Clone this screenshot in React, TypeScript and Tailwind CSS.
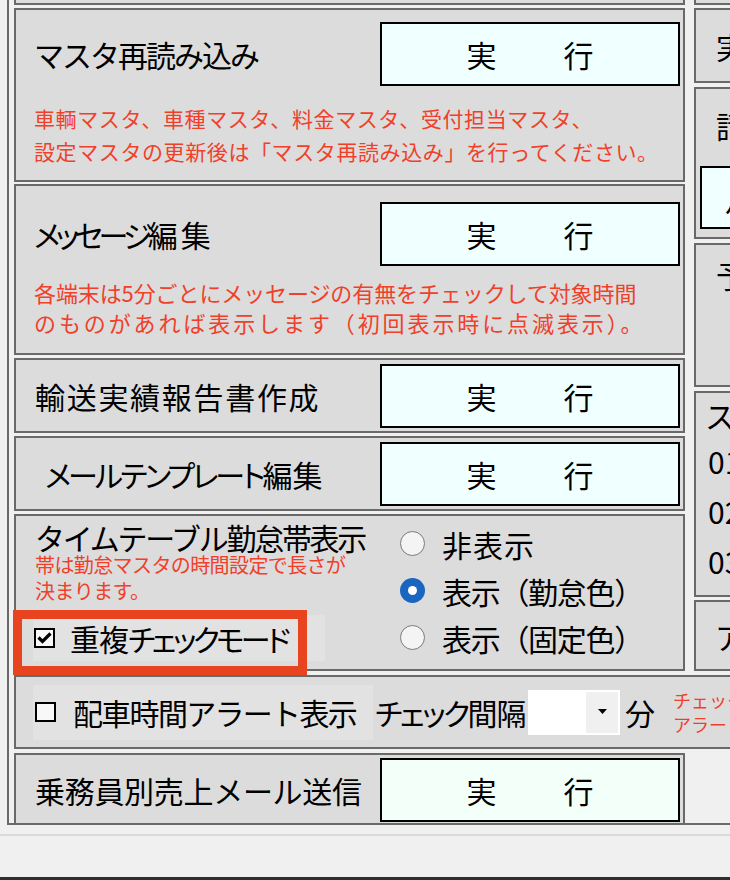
import React from 'react';

// 管理メニュー画面（一部）
const RED = 'text-[#f0402a]';
const PALT = "[font-feature-settings:'palt']";

function Panel({ className = '', children }: { className?: string; children?: React.ReactNode }) {
  return <div className={`border-2 border-[#696969] bg-[#dcdcdc] ${className}`}>{children}</div>;
}

function ExecButton({ bg = 'bg-[#f0ffff]' }: { bg?: string }) {
  return (
    <div
      className={`flex h-[64px] w-[300px] shrink-0 items-center justify-center gap-[67px] border-2 border-black ${bg} text-[30px] leading-none`}
    >
      <span>実</span>
      <span>行</span>
    </div>
  );
}

function CheckBox({ checked }: { checked?: boolean }) {
  return (
    <div className="flex h-[20px] w-[21px] shrink-0 items-center justify-center border-2 border-black bg-[#f8f8f8]">
      {checked && (
        <svg width="15" height="14" viewBox="0 0 15 14">
          <path d="M1.5 6.5 L5.5 10.5 L13.5 2.5" fill="none" stroke="black" strokeWidth="3.2" />
        </svg>
      )}
    </div>
  );
}

function Radio({ checked, label, tracking }: { checked?: boolean; label: string; tracking: string }) {
  return (
    <div className="flex h-[47px] items-center">
      {checked ? (
        <div className="flex h-[25px] w-[25px] items-center justify-center rounded-full bg-[#1a65c0]">
          <div className="h-[9px] w-[9px] rounded-full bg-white" />
        </div>
      ) : (
        <div className="h-[25px] w-[25px] rounded-full border-[1.5px] border-[#7a7a7a] bg-[#f4f4f4]" />
      )}
      <span className={`ml-[17px] text-[30px] leading-none ${tracking}`}>{label}</span>
    </div>
  );
}

export default function App() {
  return (
    <div className="relative flex h-[880px] w-[730px] flex-col overflow-hidden bg-[#f0f0f0] font-['Noto_Sans_CJK_JP','Noto_Sans_CJK_SC',sans-serif] text-black">
      {/* 外枠 */}
      <div className="ml-[7px] h-[825px] w-[830px] shrink-0 border-b-2 border-l-2 border-[#696969] pl-[5px]">
        <div className="flex">
          {/* 左列 */}
          <div className="flex w-[671px] shrink-0 flex-col">
            <div className="h-[5px] border-x-2 border-b-2 border-[#696969] bg-[#dcdcdc]" />

            <Panel className="mt-[3px] h-[174px]">
              <div className="flex items-center pl-[18px] pr-[3px] pt-[12px]">
                <span className="flex-1 text-[30px] leading-none tracking-[-2px]">マスタ再読み込み</span>
                <ExecButton />
              </div>
              <p className={`mt-[16px] whitespace-nowrap pl-[18px] text-[21px] leading-[33px] tracking-[0.6px] ${RED}`}>
                車輌マスタ、車種マスタ、料金マスタ、受付担当マスタ、
                <br />
                設定マスタの更新後は「マスタ再読み込み」を行ってください。
              </p>
            </Panel>

            <Panel className="mt-[2px] h-[171px]">
              <div className="flex items-center pl-[18px] pr-[3px] pt-[16px]">
                <span className="flex-1 whitespace-nowrap text-[30px] leading-none">
                  <span className={`${PALT} tracking-[-4.6px]`}>メッセージ</span>
                  <span className="tracking-[3px]">編集</span>
                </span>
                <ExecButton />
              </div>
              <div className={`mt-[11px] whitespace-nowrap pl-[18px] text-[22px] leading-[30px] ${RED}`}>
                <p className="tracking-[-0.1px]">各端末は5分ごとにメッセージの有無をチェックして対象時間</p>
                <p className="tracking-[2.9px]">のものがあれば表示します（初回表示時に点滅表示）。</p>
              </div>
            </Panel>

            <Panel className="mt-[3px] h-[75px]">
              <div className="flex items-center pl-[19px] pr-[3px] pt-[4px]">
                <span className="flex-1 text-[30px] leading-none tracking-[1.7px]">輸送実績報告書作成</span>
                <ExecButton />
              </div>
            </Panel>

            <Panel className="mt-[3px] h-[75px]">
              <div className="flex items-center pl-[29px] pr-[3px] pt-[4px]">
                <span className="flex-1 whitespace-nowrap text-[30px] leading-none">
                  <span className={`${PALT} tracking-[-2.9px]`}>メールテンプレート</span>
                  <span>編集</span>
                </span>
                <ExecButton />
              </div>
            </Panel>

            <Panel className="mt-[3px] flex h-[157px]">
              <div className="w-[384px] shrink-0 pl-[19px] pt-[6px]">
                <div className="whitespace-nowrap text-[30px] leading-none tracking-[-2.3px]">タイムテーブル勤怠帯表示</div>
                <p className={`text-[20px] leading-[26px] tracking-[-0.6px] ${RED}`}>
                  帯は勤怠マスタの時間設定で長さが
                  <br />
                  決まります。
                </p>
                <div className="-ml-[2px] mt-[11px] flex h-[46px] w-[292px] items-center bg-[#e2e2e2]">
                  <div className="ml-[1px]">
                    <CheckBox checked />
                  </div>
                  <span className="ml-[15px] whitespace-nowrap text-[30px] leading-none">
                    <span className="tracking-[-1px]">重複</span>
                    <span className={`${PALT} tracking-[-3.6px]`}>チェックモード</span>
                  </span>
                </div>
              </div>
              <div className="pt-[4px]">
                <Radio label="非表示" tracking="tracking-[1px]" />
                <Radio checked label="表示（勤怠色）" tracking="tracking-[-1.3px]" />
                <Radio label="表示（固定色）" tracking="tracking-[-1.3px]" />
              </div>
            </Panel>
          </div>

          {/* 右列 */}
          <div className="ml-[9px] flex w-[140px] shrink-0 flex-col whitespace-nowrap">
            <div className="h-[5px] border-x-2 border-b-2 border-[#696969] bg-[#dcdcdc]" />
            <Panel className="mt-[3px] flex h-[75px] items-center overflow-hidden pl-[20px]">
              <span className="text-[30px] leading-none">実績集計</span>
            </Panel>
            <Panel className="mt-[4px] h-[152px] overflow-hidden">
              <div className="mt-[21px] pl-[20px] text-[30px] leading-none">請求書</div>
              <div className="ml-[4px] mt-[26px] flex h-[63px] w-[200px] items-center border-2 border-black bg-[#f0ffff] pl-[23px] text-[30px] leading-none">
                月次
              </div>
            </Panel>
            <Panel className="mt-[4px] h-[144px] overflow-hidden pl-[20px] pt-[15px]">
              <span className="text-[30px] leading-none">予約</span>
            </Panel>
            <Panel className="mt-[4px] flex h-[206px] flex-col overflow-hidden pt-[7px] text-[30px] leading-none">
              <div className="pl-[9px]">スケジュール</div>
              <div className="mt-[16px] flex flex-col gap-[20px] pl-[12px]">
                <span>01:00</span>
                <span>02:00</span>
                <span>03:00</span>
              </div>
            </Panel>
            <Panel className="mt-[3px] flex h-[71px] items-center overflow-hidden pl-[19px]">
              <span className="text-[30px] leading-none">アラーム</span>
            </Panel>
          </div>
        </div>

        {/* 配車時間アラート */}
        <Panel className="mt-[4px] flex h-[74px] w-full items-center pl-[17px]">
          <div className="flex h-[55px] w-[340px] shrink-0 items-center bg-[#e2e2e2]">
            <div className="ml-[2px]">
              <CheckBox />
            </div>
            <span className="ml-[17px] whitespace-nowrap text-[30px] leading-none tracking-[-1.7px]">配車時間アラート表示</span>
          </div>
          <span className="ml-[2px] w-[153px] shrink-0 whitespace-nowrap text-[30px] leading-none">
            <span className={`${PALT} tracking-[-2.5px]`}>チェック</span>
            <span className="tracking-[-1px]">間隔</span>
          </span>
          <div className="flex h-[45px] w-[92px] shrink-0 items-center justify-end bg-white p-[2px]">
            <div className="flex h-full w-[32px] items-center justify-center bg-[#f0f0f0]">
              <svg width="9" height="6" viewBox="0 0 9 6">
                <polygon points="0,0 9,0 4.5,5" fill="black" />
              </svg>
            </div>
          </div>
          <span className="ml-[5px] w-[48px] shrink-0 text-[30px] leading-none">分</span>
          <p className={`whitespace-nowrap text-[18px] leading-[24px] ${RED}`}>
            チェック間隔ごとに配車時間を確認し
            <br />
            アラート表示します。
          </p>
        </Panel>

        {/* 乗務員別売上メール送信 */}
        <Panel className="mt-[4px] h-[70px] w-[671px] border-b-0">
          <div className="flex items-center pl-[19px] pr-[3px] pt-[3px]">
            <span className="flex-1 text-[30px] leading-none tracking-[-0.3px]">乗務員別売上メール送信</span>
            <ExecButton bg="bg-[#f3fff9]" />
          </div>
        </Panel>
      </div>

      <div className="mt-[9px] h-[2px] shrink-0 bg-[#dadada]" />
      <div className="flex-1" />
      <div className="h-[3px] shrink-0 bg-[#2e2e2e]" />

      {/* 注目枠 */}
      <div className="absolute left-[13px] top-[610px] h-[65px] w-[294px] border-[9px] border-[#e8441f]" />
    </div>
  );
}
